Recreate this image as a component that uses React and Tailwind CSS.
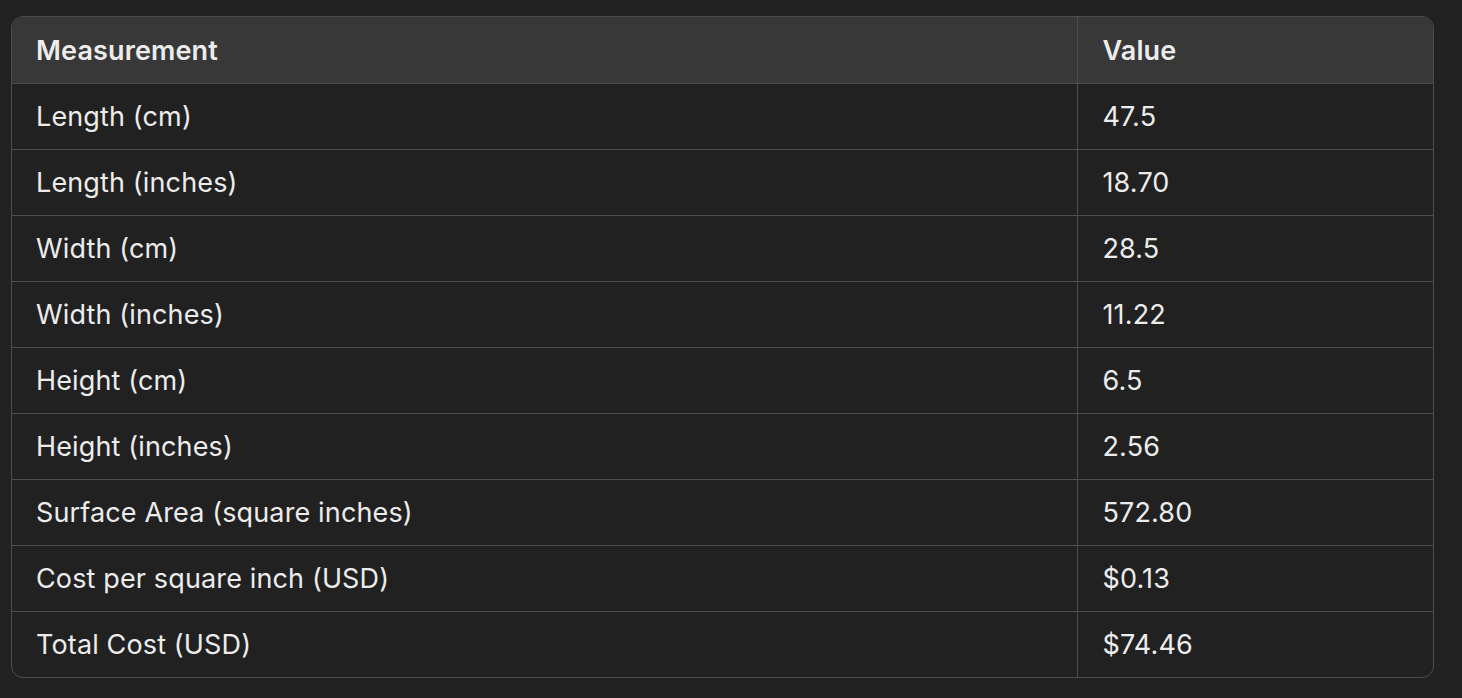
const rows = [
  ['Length (cm)', '47.5'],
  ['Length (inches)', '18.70'],
  ['Width (cm)', '28.5'],
  ['Width (inches)', '11.22'],
  ['Height (cm)', '6.5'],
  ['Height (inches)', '2.56'],
  ['Surface Area (square inches)', '572.80'],
  ['Cost per square inch (USD)', '$0.13'],
  ['Total Cost (USD)', '$74.46'],
];

export default function App() {
  return (
    <div
      className="w-[1462px] h-[698px] bg-[#212121] pt-4 pl-[11px] text-[#ececec]"
      style={{ fontFamily: 'Inter, "Noto Sans", sans-serif' }}
    >
      <div className="w-[1423px] rounded-xl border border-[#4d4d4d] overflow-hidden">
        <table className="w-full border-collapse text-[27px] tracking-[0.005em]">
          <thead>
            <tr className="bg-[#383838] h-[66px]">
              <th className="text-left font-semibold px-6 pt-[2px] w-[1065px] border-r border-[#4d4d4d]">Measurement</th>
              <th className="text-left font-semibold px-6 pt-[2px] pl-[25px]">Value</th>
            </tr>
          </thead>
          <tbody>
            {rows.map(([k, v]) => (
              <tr key={k} className="h-[66px] border-t border-[#4d4d4d]">
                <td className="px-6 pt-[2px] border-r border-[#4d4d4d]">{k}</td>
                <td className="px-6 pt-[2px] pl-[25px]">{v}</td>
              </tr>
            ))}
          </tbody>
        </table>
      </div>
    </div>
  );
}
